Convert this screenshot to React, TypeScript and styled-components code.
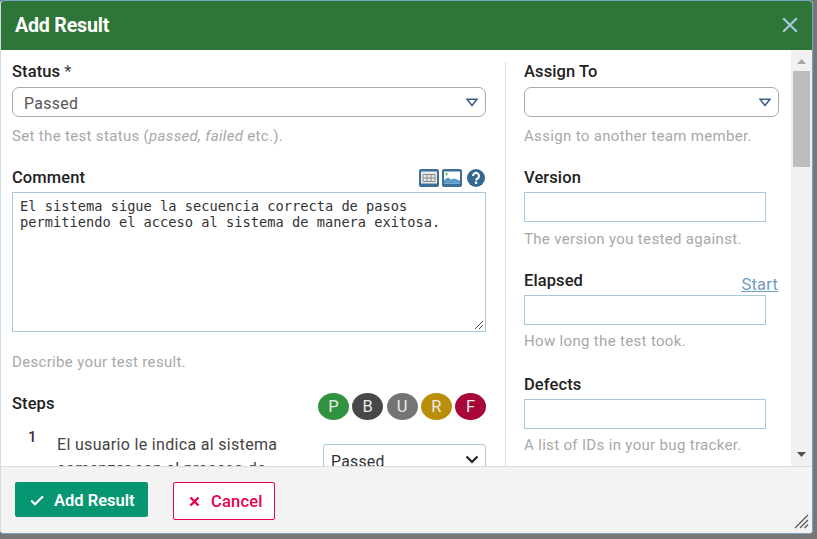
import React from "react";
import styled, { createGlobalStyle } from "styled-components";

const Global = createGlobalStyle`
  html, body { margin: 0; padding: 0; height: 100%; background: #787878; overflow: hidden; }
  * { box-sizing: border-box; }
  body { font-family: Roboto, "Liberation Sans", sans-serif; }
`;
const Page = styled.div`
  width: 817px; height: 539px; background: #777; padding: 0 4px 5px 0;
`;
const Modal = styled.div`
  width: 813px; height: 534px; display: flex; flex-direction: column;
  border: 1px solid #7aa3c8; border-left-color: #cfdce6; border-radius: 4px; background: #fff; overflow: hidden; position: relative;
`;
const Header = styled.div`
  height: 49px; flex: none; background: #2e7638; display: flex; align-items: center; justify-content: space-between; padding: 0 14px 0 14px;
`;
const Title = styled.div`
  color: #fff; font-size: 19.6px; font-weight: 700; letter-spacing: -0.2px;
`;
const CloseIcon = styled.svg`
  margin-bottom: 2px;
`;
const Main = styled.div`
  flex: 1; min-height: 0; display: flex;
`;
const Content = styled.div`
  flex: 1; min-width: 0; overflow: hidden; display: flex; padding: 12px 0 0 11px;
`;
const LeftCol = styled.div`
  width: 474px; flex: none;
`;
const RightCol = styled.div`
  width: 274px; flex: none; margin-left: 19px; border-left: 1px solid #d3dfe8; padding-left: 18px; height: 500px;
`;
const Label = styled.div<{ $h?: number }>`
  height: ${(p) => p.$h ?? 25}px; padding-top: 1px; font-size: 16.5px; line-height: 18px; font-weight: 500; color: #222; letter-spacing: 0.1px; white-space: nowrap;
  span { font-weight: 400; color: #444; }
`;
const LabelRow = styled.div`
  height: 24px; display: flex; justify-content: space-between; align-items: flex-start;
`;
const Hint = styled.div<{ $mt: number; $mb: number }>`
  margin: ${(p) => p.$mt}px 0 ${(p) => p.$mb}px; height: 18px; line-height: 18px; font-size: 15px; color: #a8a8a8; letter-spacing: 0.33px; white-space: nowrap;
  i { font-style: italic; }
`;
const SelectBox = styled.div<{ $w: number }>`
  width: ${(p) => p.$w}px; height: 30px; border: 1px solid #a9a9a9; border-radius: 7px; display: flex; align-items: center; justify-content: space-between;
  padding: 0 7px 0 11px; font-size: 15.8px; color: #555; letter-spacing: 0.35px;
`;
const SelectValue = styled.span`
  padding-top: 2px;
`;
const Input = styled.div`
  width: 242px; height: 30px; border: 1px solid #a8c8dc; background: #fff;
`;
const TextArea = styled.div`
  width: 474px; height: 140px; border: 1px solid #a8c8dc; padding: 5px 7px; position: relative;
  font-family: "DejaVu Sans Mono", monospace; font-size: 13.7px; line-height: 16px; color: #333;
`;
const Resizer = styled.svg`
  position: absolute; right: 1px; bottom: 1px; width: 11px; height: 11px;
`;
const IconGroup = styled.div`
  display: flex; align-items: center; gap: 3px; margin: 1px 1px 0 0;
`;
const IconBtn = styled.svg`
  display: block;
`;
const HelpIcon = styled.svg`
  display: block; margin-left: 2px;
`;
const StepsHead = styled.div`
  height: 27px; display: flex; justify-content: space-between; align-items: center;
`;
const StepsLabel = styled(Label)`
  height: 19px; margin-top: -6px;
`;
const Badges = styled.div`
  display: flex; gap: 3.25px;
`;
const Badge = styled.div<{ $bg: string }>`
  width: 31px; height: 27px; border-radius: 50%; background: ${(p) => p.$bg}; color: #e9e9e9; display: flex; align-items: center; justify-content: center; font-size: 16.5px;
`;
const StepRow = styled.div`
  display: grid; grid-template-columns: 45px 266px 163px; margin-top: 8px;
`;
const StepNum = styled.div`
  padding-left: 16px; font-size: 15px; font-weight: 500; color: #3a2a45; line-height: 18px;
`;
const StepText = styled.div`
  margin-top: 5px; font-size: 16px; line-height: 24px; color: #444; letter-spacing: 0.32px;
`;
const StepSelect = styled.div`
  margin-top: 16px; height: 34px; border: 1px solid #a8c8dc; border-radius: 3px; display: flex; justify-content: space-between; align-items: center; padding: 0 6px 0 7px; font-size: 15.8px; color: #333; letter-spacing: 0.25px;
`;
const ChevronIcon = styled.svg`
  margin-top: -4px;
`;
const StartLink = styled.a`
  font-size: 16.5px; color: #6f9cc0; text-decoration: underline; margin-top: 4px; letter-spacing: 0.2px; margin-right: 1px;
`;
const Scrollbar = styled.div`
  width: 21px; flex: none; background: #f1f1f1; display: flex; flex-direction: column; align-items: center; padding: 0 2px;
`;
const ScrollBtn = styled.svg`
  flex: none; display: block;
`;
const Thumb = styled.div`
  width: 17px; height: 96px; background: #bdbdbd; margin-top: 1px; flex: none;
`;
const Spacer = styled.div`
  flex: 1;
`;
const Footer = styled.div`
  height: 67px; flex: none; background: #f3f3f3; border-top: 1px solid #dcdcdc; display: flex; align-items: flex-start; gap: 25px; padding: 15px 0 0 14px; position: relative;
`;
const PrimaryBtn = styled.div`
  width: 133px; height: 35px; background: #069672; color: #fff; border-radius: 2px; display: flex; align-items: center; gap: 10px; padding: 1px 0 0 15px; font-weight: 600; font-size: 16.5px;
`;
const CancelBtn = styled.div`
  width: 102px; height: 38px; background: #fff; color: #e6004f; border: 1px solid #e6004f; border-radius: 2px; display: flex; align-items: center; gap: 11px; padding-left: 15px; font-weight: 500; font-size: 16.5px; letter-spacing: 0.2px;
`;
const Grip = styled.svg`
  position: absolute; right: 3px; bottom: 4px;
`;

const Tri = () => (
  <svg width="12" height="9" viewBox="0 0 12 9"><path d="M1 1.2h10L6 7.5z" fill="#fff" stroke="#3c6286" strokeWidth="1.6" /></svg>
);
const Chevron = () => (
  <ChevronIcon width="14" height="9" viewBox="0 0 14 9"><path d="M1.5 1.5L7 7l5.5-5.5" fill="none" stroke="#222" strokeWidth="2.2" /></ChevronIcon>
);

export default function App() {
  return (
    <Page>
      <Global />
      <Modal>
        <Header>
          <Title>Add Result</Title>
          <CloseIcon width="16" height="16" viewBox="0 0 16 16"><path d="M1.2 1.2l13.6 13.6M14.8 1.2L1.2 14.8" stroke="#a8c8dc" strokeWidth="2.2" /></CloseIcon>
        </Header>
        <Main>
          <Content>
            <LeftCol>
              <Label>Status <span>*</span></Label>
              <SelectBox $w={474}><SelectValue>Passed</SelectValue><Tri /></SelectBox>
              <Hint $mt={10} $mb={23}>Set the test status (<i>passed, failed</i> etc.).</Hint>
              <LabelRow>
                <Label $h={19}>Comment</Label>
                <IconGroup>
                  <IconBtn width="20" height="18" viewBox="0 0 20 18">
                    <rect x="0" y="0" width="20" height="18" rx="2" fill="#3c6e96" />
                    <rect x="2" y="2.5" width="16" height="12" fill="#e8e8e8" />
                    <path d="M4 5.5h12v7H4zM4 9h12M8 5.5v7M12 5.5v7" fill="none" stroke="#8a8a8a" strokeWidth="1" />
                  </IconBtn>
                  <IconBtn width="20" height="18" viewBox="0 0 20 18">
                    <rect x="0" y="0" width="20" height="18" rx="2" fill="#3c6e96" />
                    <rect x="2" y="2.5" width="16" height="12" fill="#fff" />
                    <path d="M2 14.5v-3.5l4-2.5 3 2 3-1 6 2v3z" fill="#5b9bc9" />
                    <circle cx="4.5" cy="5" r="1.2" fill="#4cc65a" />
                  </IconBtn>
                  <HelpIcon width="18" height="18" viewBox="0 0 18 18">
                    <circle cx="9" cy="9" r="9" fill="#36688f" />
                    <path d="M6 7a3 3 0 1 1 4.6 2.5c-1 .6-1.5 1-1.5 2" fill="none" stroke="#fff" strokeWidth="2.1" />
                    <rect x="7.9" y="12.6" width="2.3" height="2.3" fill="#fff" />
                  </HelpIcon>
                </IconGroup>
              </LabelRow>
              <TextArea>
                El sistema sigue la secuencia correcta de pasos<br />
                permitiendo el acceso al sistema de manera exitosa.
                <Resizer viewBox="0 0 11 11"><path d="M10 2L2 10M10 6L6 10" stroke="#555" strokeWidth="1" /></Resizer>
              </TextArea>
              <Hint $mt={21} $mb={22}>Describe your test result.</Hint>
              <StepsHead>
                <StepsLabel>Steps</StepsLabel>
                <Badges>
                  <Badge $bg="#31923f">P</Badge>
                  <Badge $bg="#484848">B</Badge>
                  <Badge $bg="#747474">U</Badge>
                  <Badge $bg="#b98f0a">R</Badge>
                  <Badge $bg="#a80838">F</Badge>
                </Badges>
              </StepsHead>
              <StepRow>
                <StepNum>1</StepNum>
                <StepText>El usuario le indica al sistema comenzar con el proceso de</StepText>
                <StepSelect>Passed<Chevron /></StepSelect>
              </StepRow>
            </LeftCol>
            <RightCol>
              <Label>Assign To</Label>
              <SelectBox $w={255}><span />
                <Tri /></SelectBox>
              <Hint $mt={10} $mb={23}>Assign to another team member.</Hint>
              <Label $h={24}>Version</Label>
              <Input />
              <Hint $mt={8} $mb={23}>The version you tested against.</Hint>
              <LabelRow>
                <Label $h={19}>Elapsed</Label>
                <StartLink>Start</StartLink>
              </LabelRow>
              <Input />
              <Hint $mt={7} $mb={25}>How long the test took.</Hint>
              <Label $h={24}>Defects</Label>
              <Input />
              <Hint $mt={7} $mb={1}>A list of IDs in your bug tracker.</Hint>
            </RightCol>
          </Content>
          <Scrollbar>
            <ScrollBtn width="11" height="20" viewBox="0 0 11 20"><path d="M1 14h9L5.5 9z" fill="#a6a6a6" /></ScrollBtn>
            <Thumb />
            <Spacer />
            <ScrollBtn width="11" height="20" viewBox="0 0 11 20"><path d="M1 6h9L5.5 11z" fill="#505050" /></ScrollBtn>
          </Scrollbar>
        </Main>
        <Footer>
          <PrimaryBtn>
            <svg width="14" height="11" viewBox="0 0 14 11"><path d="M1.2 5.5l3.8 3.8 8-8" fill="none" stroke="#fff" strokeWidth="2.2" /></svg>
            Add Result
          </PrimaryBtn>
          <CancelBtn>
            <svg width="11" height="11" viewBox="0 0 11 11"><path d="M1.5 1.5l8 8M9.5 1.5l-8 8" stroke="#e6004f" strokeWidth="2.4" /></svg>
            Cancel
          </CancelBtn>
          <Grip width="15" height="15" viewBox="0 0 15 15"><path d="M14 1L1 14M14 6L6 14M14 10.5L10.5 14" stroke="#555" strokeWidth="1.2" /></Grip>
        </Footer>
      </Modal>
    </Page>
  );
}
